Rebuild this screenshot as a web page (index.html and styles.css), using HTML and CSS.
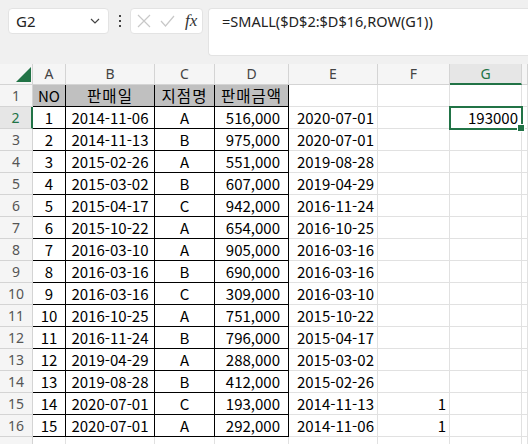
FILE: index.html
```html
<!DOCTYPE html>
<html lang="ko">
<head>
  <meta charset="UTF-8">
  <title>Sheet</title>
  <link rel="stylesheet" href="styles.css">
</head>
<body>
  <div class="toolbar">
    <div class="nameBox">
      <span>G2</span>
      <svg class="chev" width="10" height="6" viewBox="0 0 10 6"><path d="M1 1l4 4 4-4" fill="none" stroke="#444" stroke-width="1.2"/></svg>
    </div>
    <div class="dots"><i></i><i></i><i></i></div>
    <div class="fxBox">
      <svg width="14" height="14" viewBox="0 0 14 14"><path d="M1 1l12 12M13 1L1 13" stroke="#c8c8c8" stroke-width="1.2"/></svg>
      <svg width="15" height="12" viewBox="0 0 15 12"><path d="M1 6l4.5 5L14 1" fill="none" stroke="#c8c8c8" stroke-width="1.2"/></svg>
      <span class="fx">fx</span>
    </div>
    <div class="formula">=SMALL($D$2:$D$16,ROW(G1))</div>
  </div>

  <div class="sheet">
    <div class="row colHead">
      <div class="corner"><svg width="15" height="15" viewBox="0 0 15 15"><path d="M15 0V15H0Z" fill="#217346"/></svg></div>
      <div>A</div><div>B</div><div>C</div><div>D</div><div>E</div><div>F</div><div class="sel">G</div><div></div>
    </div>
    <div class="row">
      <div class="rh">1</div>
      <div class="t hd">NO</div><div class="t hd ko">판매일</div><div class="t hd ko">지점명</div><div class="t hd ko">판매금액</div>
      <div></div><div></div><div></div><div></div>
    </div>
    <div class="row">
      <div class="rh sel">2</div>
      <div class="t c">1</div><div class="t c">2014-11-06</div><div class="t c">A</div><div class="t n">516,000</div>
      <div class="r">2020-07-01</div><div></div><div class="r active">193000<span class="cursor"></span></div><div></div>
    </div>
    <div class="row">
      <div class="rh">3</div>
      <div class="t c">2</div><div class="t c">2014-11-13</div><div class="t c">B</div><div class="t n">975,000</div>
      <div class="r">2020-07-01</div><div></div><div></div><div></div>
    </div>
    <div class="row">
      <div class="rh">4</div>
      <div class="t c">3</div><div class="t c">2015-02-26</div><div class="t c">A</div><div class="t n">551,000</div>
      <div class="r">2019-08-28</div><div></div><div></div><div></div>
    </div>
    <div class="row">
      <div class="rh">5</div>
      <div class="t c">4</div><div class="t c">2015-03-02</div><div class="t c">B</div><div class="t n">607,000</div>
      <div class="r">2019-04-29</div><div></div><div></div><div></div>
    </div>
    <div class="row">
      <div class="rh">6</div>
      <div class="t c">5</div><div class="t c">2015-04-17</div><div class="t c">C</div><div class="t n">942,000</div>
      <div class="r">2016-11-24</div><div></div><div></div><div></div>
    </div>
    <div class="row">
      <div class="rh">7</div>
      <div class="t c">6</div><div class="t c">2015-10-22</div><div class="t c">A</div><div class="t n">654,000</div>
      <div class="r">2016-10-25</div><div></div><div></div><div></div>
    </div>
    <div class="row">
      <div class="rh">8</div>
      <div class="t c">7</div><div class="t c">2016-03-10</div><div class="t c">A</div><div class="t n">905,000</div>
      <div class="r">2016-03-16</div><div></div><div></div><div></div>
    </div>
    <div class="row">
      <div class="rh">9</div>
      <div class="t c">8</div><div class="t c">2016-03-16</div><div class="t c">B</div><div class="t n">690,000</div>
      <div class="r">2016-03-16</div><div></div><div></div><div></div>
    </div>
    <div class="row">
      <div class="rh">10</div>
      <div class="t c">9</div><div class="t c">2016-03-16</div><div class="t c">C</div><div class="t n">309,000</div>
      <div class="r">2016-03-10</div><div></div><div></div><div></div>
    </div>
    <div class="row">
      <div class="rh">11</div>
      <div class="t c">10</div><div class="t c">2016-10-25</div><div class="t c">A</div><div class="t n">751,000</div>
      <div class="r">2015-10-22</div><div></div><div></div><div></div>
    </div>
    <div class="row">
      <div class="rh">12</div>
      <div class="t c">11</div><div class="t c">2016-11-24</div><div class="t c">B</div><div class="t n">796,000</div>
      <div class="r">2015-04-17</div><div></div><div></div><div></div>
    </div>
    <div class="row">
      <div class="rh">13</div>
      <div class="t c">12</div><div class="t c">2019-04-29</div><div class="t c">A</div><div class="t n">288,000</div>
      <div class="r">2015-03-02</div><div></div><div></div><div></div>
    </div>
    <div class="row">
      <div class="rh">14</div>
      <div class="t c">13</div><div class="t c">2019-08-28</div><div class="t c">B</div><div class="t n">412,000</div>
      <div class="r">2015-02-26</div><div></div><div></div><div></div>
    </div>
    <div class="row">
      <div class="rh">15</div>
      <div class="t c">14</div><div class="t c">2020-07-01</div><div class="t c">C</div><div class="t n">193,000</div>
      <div class="r">2014-11-13</div><div class="r">1</div><div></div><div></div>
    </div>
    <div class="row">
      <div class="rh">16</div>
      <div class="t c">15</div><div class="t c">2020-07-01</div><div class="t c">A</div><div class="t n">292,000</div>
      <div class="r">2014-11-06</div><div class="r">1</div><div></div><div></div>
    </div>
    <div class="row">
      <div class="rh"></div>
      <div></div><div></div><div></div><div></div><div></div><div></div><div></div><div></div>
    </div>
  </div>
</body>
</html>
```

FILE: styles.css
```css
* {
  box-sizing: border-box;
  margin: 0;
  padding: 0;
}
body {
  background-color: #fff;
  width: 528px;
  height: 444px;
  overflow: hidden;
  font-family: "Noto Sans", "Noto Sans CJK KR", sans-serif;
}

/* formula bar */
.toolbar {
  display: flex;
  align-items: flex-start;
  background-color: #f0f0f0;
  padding: 8px 0 8px 8px;
  height: 64px;
}
.nameBox {
  width: 101px;
  height: 26px;
  background: #fff;
  border: 1px solid #e3e3e3;
  border-radius: 4px;
  display: flex;
  align-items: center;
  justify-content: space-between;
  padding: 0 8px 0 7px;
  font-size: 15px;
  color: #222;
}
.dots {
  width: 21px;
  height: 26px;
  display: flex;
  flex-direction: column;
  align-items: center;
  justify-content: center;
  gap: 3px;
}
.dots i {
  display: block;
  width: 2px;
  height: 2px;
  background: #444;
}
.fxBox {
  width: 73px;
  height: 26px;
  background: #fff;
  border: 1px solid #e3e3e3;
  border-radius: 4px;
  display: flex;
  align-items: center;
  gap: 9px;
  padding-left: 6px;
}
.fx {
  font-family: "Liberation Serif", serif;
  font-style: italic;
  font-size: 17px;
  color: #333;
  margin-left: 1px;
}
.formula {
  flex: 1;
  margin-left: 5px;
  height: 48px;
  background: #fff;
  border: 1px solid #e3e3e3;
  border-right: none;
  border-radius: 4px 0 0 4px;
  padding: 2px 0 0 13px;
  font-size: 14.5px;
  color: #222;
}

/* grid */
.row {
  display: grid;
  grid-template-columns: 33px 33px 89px 60px 74px 89px 72px 72px 1fr;
  height: 22px;
  font-family: "Noto Sans CJK KR", sans-serif;
  font-size: 15px;
  color: #000;
}
.row > div {
  border-right: 1px solid #e1e1e1;
  border-bottom: 1px solid #e1e1e1;
  line-height: 21px;
  white-space: nowrap;
  overflow: hidden;
}
.row .t {
  border-color: #000;
}
.row .hd {
  background: #c0c0c0;
  text-align: center;
  overflow: visible;
}
.row .ko {
  font-size: 15.5px;
  letter-spacing: 1px;
  line-height: 20px;
}
.row .c {
  text-align: center;
}
.row .n {
  text-align: right;
  padding-right: 8px;
}
.row .r {
  text-align: right;
  padding-right: 3px;
}

.colHead {
  height: 21px;
}
.colHead > div,
.row > .rh {
  background: #f5f5f5;
  border-color: #d4d4d4;
  text-align: center;
  font-family: "Noto Sans", sans-serif;
  font-size: 14px;
  color: #444;
  line-height: 20px;
}
.row > .rh {
  line-height: 21px;
  color: #555;
}
.colHead .corner {
  display: flex;
  align-items: flex-end;
  justify-content: flex-end;
  padding: 0 1px 2px 0;
}
.colHead .sel {
  background: #e6e6e6;
  color: #217346;
  border-bottom: 2px solid #217346;
}
.row > .rh.sel {
  background: #e6e6e6;
  color: #217346;
  border-right: 2px solid #217346;
}

/* active cell */
.row .active {
  position: relative;
  overflow: visible;
}
.cursor {
  position: absolute;
  top: -1px;
  left: -1px;
  right: -2px;
  bottom: -2px;
  border: 2px solid #217346;
}
.cursor::after {
  content: "";
  position: absolute;
  right: -4px;
  bottom: -4px;
  width: 6px;
  height: 6px;
  background: #217346;
  border: 1px solid #fff;
}
```
